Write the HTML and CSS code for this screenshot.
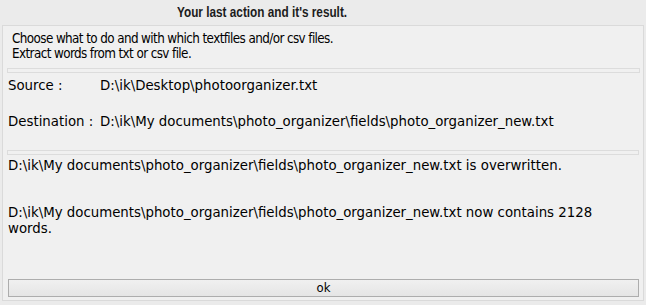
FILE: index.html
```html
<!DOCTYPE html>
<html>
<head>
<meta charset="utf-8">
<link rel="stylesheet" href="styles.css">
</head>
<body>
<div class="title"><span class="title-text">Your last action and it's result.</span></div>
<div class="panel">
  <div class="intro">
    <div>Choose what to do and with which textfiles and/or csv files.</div>
    <div>Extract words from txt or csv file.</div>
  </div>
  <div class="sep sep-first"></div>
  <div class="row row-source"><span class="label">Source :</span><span>D:\ik\Desktop\photoorganizer.txt</span></div>
  <div class="row row-dest"><span class="label">Destination :</span><span>D:\ik\My documents\photo_organizer\fields\photo_organizer_new.txt</span></div>
  <div class="sep sep-second"></div>
  <div class="msg msg-over">D:\ik\My documents\photo_organizer\fields\photo_organizer_new.txt is overwritten.</div>
  <div class="msg msg-count">D:\ik\My documents\photo_organizer\fields\photo_organizer_new.txt now contains 2128<br>words.</div>
  <button class="ok">ok</button>
</div>
</body>
</html>
```
FILE: styles.css
```css
html, body {
  margin: 0;
  padding: 0;
}
body {
  width: 646px;
  height: 305px;
  background: #ebebeb;
  font-family: "DejaVu Sans Condensed", "DejaVu Sans", sans-serif;
  font-stretch: condensed;
  font-size: 12px;
  color: #000;
  overflow: hidden;
}
.title {
  height: 25px;
  line-height: 23px;
  box-sizing: border-box;
  padding-left: 177px;
  font-family: "Liberation Sans", Arial, sans-serif;
  font-stretch: normal;
  font-weight: bold;
  font-size: 15px;
  color: #1c1c1c;
  white-space: nowrap;
}
.title-text {
  display: inline-block;
  transform: scaleX(0.785);
  transform-origin: left center;
}
.panel {
  margin: 0 2px;
  height: 276px;
  box-sizing: border-box;
  border: 1px solid #dadada;
  background: #f0f0f0;
  display: flex;
  flex-direction: column;
  padding: 0 3px 3px 4px;
}
.intro {
  padding: 5px 0 0 5px;
  font-size: 13.33px;
  letter-spacing: -0.6px;
  line-height: 15px;
  white-space: nowrap;
}
.sep {
  height: 5px;
  box-sizing: border-box;
  border: 1px solid #dcdcdc;
  background: #f0f0f0;
}
.sep-first {
  margin-top: 7px;
}
.row, .msg {
  font-family: "DejaVu Sans", sans-serif;
  font-stretch: normal;
  font-size: 13.33px;
  line-height: 16px;
  padding-left: 1px;
}
.row {
  display: grid;
  grid-template-columns: 92px auto;
  white-space: nowrap;
}
.row-source {
  margin-top: 5px;
}
.row-dest {
  margin-top: 20px;
}
.sep-second {
  margin-top: 20px;
  margin-right: 1px;
}
.msg-over {
  margin-top: 3px;
}
.msg-count {
  margin-top: 31px;
}
.ok {
  margin: auto 1px 0 1px;
  height: 18px;
  box-sizing: border-box;
  border: 1px solid #adadad;
  border-radius: 0;
  background: linear-gradient(#f0f0f0, #e5e5e5);
  padding: 0;
  font-family: inherit;
  font-stretch: condensed;
  font-size: 13px;
  line-height: 16px;
  color: #000;
}
```
